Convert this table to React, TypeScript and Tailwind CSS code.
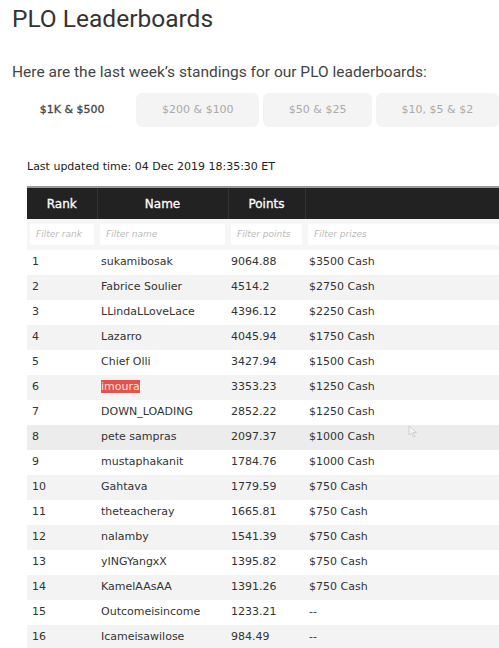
import React from 'react';

const tabs = ['$1K & $500', '$200 & $100', '$50 & $25', '$10, $5 & $2'];

const rows: Array<[number, string, string, string]> = [
  [1, 'sukamibosak', '9064.88', '$3500 Cash'],
  [2, 'Fabrice Soulier', '4514.2', '$2750 Cash'],
  [3, 'LLindaLLoveLace', '4396.12', '$2250 Cash'],
  [4, 'Lazarro', '4045.94', '$1750 Cash'],
  [5, 'Chief Olli', '3427.94', '$1500 Cash'],
  [6, 'imoura', '3353.23', '$1250 Cash'],
  [7, 'DOWN_LOADING', '2852.22', '$1250 Cash'],
  [8, 'pete sampras', '2097.37', '$1000 Cash'],
  [9, 'mustaphakanit', '1784.76', '$1000 Cash'],
  [10, 'Gahtava', '1779.59', '$750 Cash'],
  [11, 'theteacheray', '1665.81', '$750 Cash'],
  [12, 'nalamby', '1541.39', '$750 Cash'],
  [13, 'yINGYangxX', '1395.82', '$750 Cash'],
  [14, 'KamelAAsAA', '1391.26', '$750 Cash'],
  [15, 'Outcomeisincome', '1233.21', '--'],
  [16, 'Icameisawilose', '984.49', '--'],
];

const filters = ['Filter rank', 'Filter name', 'Filter points', 'Filter prizes'];

const App = () => {
  return (
    <div className="relative w-[499px] h-[648px] overflow-hidden bg-white">
      <div className="pl-[12px] pt-[3px]">
        <h1 className="text-[24.5px] leading-[32px] text-[#333] font-['Roboto',sans-serif]">PLO Leaderboards</h1>
        <p className="mt-[27px] text-[15.5px] leading-[20px] text-[#444] font-['Roboto',sans-serif]">
          Here are the last week’s standings for our PLO leaderboards:
        </p>
        <div className="mt-[11px] flex gap-[4px] whitespace-nowrap font-['DejaVu_Sans',sans-serif] text-[11px]">
          {tabs.map((t, i) => (
            <div
              key={t}
              className={
                i === 0
                  ? 'w-[121px] h-[34px] flex items-center justify-center rounded-t-[6px] bg-white text-[#444] [-webkit-text-stroke:0.3px_#444]'
                  : i === 1
                  ? 'w-[124px] h-[34px] flex items-center justify-center rounded-[6px] bg-[#f4f4f4] text-[#aaa]'
                  : i === 2
                  ? 'w-[109px] h-[34px] flex items-center justify-center rounded-[6px] bg-[#f4f4f4] text-[#aaa]'
                  : 'w-[124px] h-[34px] flex items-center justify-center rounded-[6px] bg-[#f4f4f4] text-[#aaa]'
              }
            >
              {t}
            </div>
          ))}
        </div>
      </div>

      <div className="ml-[27px] mt-[33px] font-['DejaVu_Sans',sans-serif]">
        <p className="text-[11px] leading-[14px] text-[#222]">Last updated time: 04 Dec 2019 18:35:30 ET</p>
        <table className="mt-[12px] w-[500px] table-fixed border-collapse text-[11px] text-[#333]">
          <colgroup>
            <col className="w-[70px]" />
            <col className="w-[131px]" />
            <col className="w-[77px]" />
            <col />
          </colgroup>
          <thead>
            <tr className="h-[32px] bg-[#222] text-white text-[12px] border-t-2 border-[#999]">
              <th className="font-normal border-r border-[#333] [-webkit-text-stroke:0.3px_#fff]">Rank</th>
              <th className="font-normal border-r border-[#333] [-webkit-text-stroke:0.3px_#fff]">Name</th>
              <th className="font-normal border-r border-[#333] [-webkit-text-stroke:0.3px_#fff]">Points</th>
              <th></th>
            </tr>
            <tr className="h-[31px] bg-[#f6f6f6]">
              {filters.map((f) => (
                <th key={f} className="px-[3px] font-normal">
                  <div className="h-[21px] bg-white rounded-[2px] flex items-center px-[6px] text-[9px] italic text-[#bbb] text-left">
                    {f}
                  </div>
                </th>
              ))}
            </tr>
          </thead>
          <tbody>
            {rows.map(([rank, name, pts, prize]) => (
              <tr
                key={rank}
                className={
                  rank === 8
                    ? 'h-[25px] bg-[#ececec]'
                    : rank % 2 === 0
                    ? 'h-[25px] bg-[#f3f3f3]'
                    : 'h-[25px] bg-white'
                }
              >
                <td className="pl-[5px]">{rank}</td>
                <td className="pl-[4px]">
                  {rank === 6 ? <span className="bg-[#e5524c] text-[#fde0de]">{name}</span> : name}
                </td>
                <td className="pl-[3px]">{pts}</td>
                <td className="pl-[4px]">{prize}</td>
              </tr>
            ))}
          </tbody>
        </table>
      </div>

      <svg className="absolute left-[408px] top-[425px]" width="10" height="13" viewBox="0 0 10 13">
        <path d="M1 1 L1 10 L3.5 8 L5.5 12 L7 11.3 L5 7.5 L8.5 7.5 Z" fill="#f4f4f4" stroke="#c8c8c8" strokeWidth="0.8" />
      </svg>
    </div>
  );
};

export default App;
